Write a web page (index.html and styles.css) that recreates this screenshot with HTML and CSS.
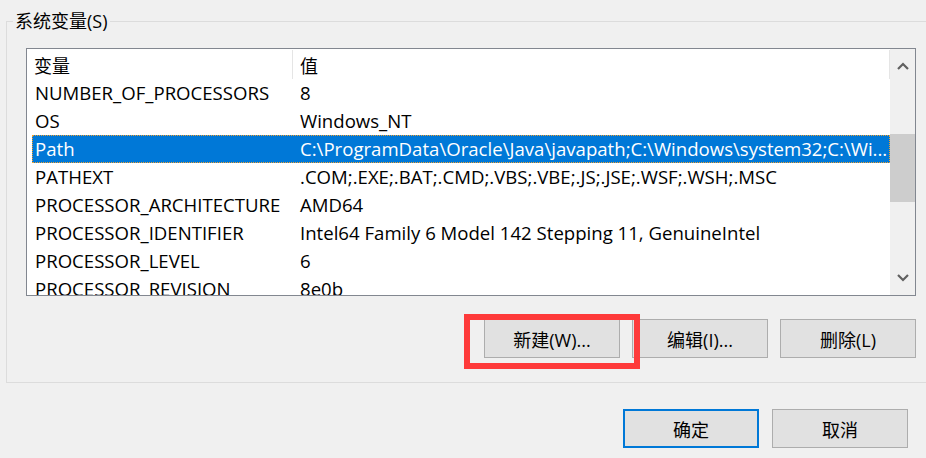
FILE: index.html
```html
<!DOCTYPE html>
<html lang="zh-CN">
<head>
<meta charset="utf-8">
<title>系统变量</title>
<link rel="stylesheet" href="styles.css">
</head>
<body>
<div class="page">
  <fieldset class="group">
    <legend class="group-title">系统变量(S)</legend>
    <div class="listbox">
      <div class="list-main">
        <div class="list-head">
          <div class="cell c1">变量</div>
          <div class="cell c2">值</div>
        </div>
        <div class="row"><div class="cell c1">NUMBER_OF_PROCESSORS</div><div class="cell c2">8</div></div>
        <div class="row"><div class="cell c1">OS</div><div class="cell c2">Windows_NT</div></div>
        <div class="row selected"><div class="cell c1">Path</div><div class="cell c2">C:\ProgramData\Oracle\Java\javapath;C:\Windows\system32;C:\Wi...</div></div>
        <div class="row"><div class="cell c1">PATHEXT</div><div class="cell c2">.COM;.EXE;.BAT;.CMD;.VBS;.VBE;.JS;.JSE;.WSF;.WSH;.MSC</div></div>
        <div class="row"><div class="cell c1">PROCESSOR_ARCHITECTURE</div><div class="cell c2">AMD64</div></div>
        <div class="row"><div class="cell c1">PROCESSOR_IDENTIFIER</div><div class="cell c2">Intel64 Family 6 Model 142 Stepping 11, GenuineIntel</div></div>
        <div class="row"><div class="cell c1">PROCESSOR_LEVEL</div><div class="cell c2">6</div></div>
        <div class="row"><div class="cell c1">PROCESSOR_REVISION</div><div class="cell c2">8e0b</div></div>
      </div>
      <div class="scrollbar">
        <div class="sb-arrow">
          <svg width="12" height="8" viewBox="0 0 12 8"><path d="M1 7 L6 2 L11 7" fill="none" stroke="#606060" stroke-width="2.2"/></svg>
        </div>
        <div class="sb-track"><div class="sb-thumb"></div></div>
        <div class="sb-arrow">
          <svg width="12" height="8" viewBox="0 0 12 8"><path d="M1 1 L6 6 L11 1" fill="none" stroke="#606060" stroke-width="2.2"/></svg>
        </div>
      </div>
    </div>
    <div class="btn-row">
      <div class="btn-wrap">
        <button class="btn">新建(W)...</button>
        <span class="highlight-box"></span>
      </div>
      <button class="btn">编辑(I)...</button>
      <button class="btn">删除(L)</button>
    </div>
  </fieldset>
  <div class="dialog-buttons">
    <button class="btn btn-default">确定</button>
    <button class="btn">取消</button>
  </div>
</div>
</body>
</html>
```

FILE: styles.css
```css
html, body {
  margin: 0;
  padding: 0;
  background: #f0f0f0;
  overflow: hidden;
}

body {
  width: 926px;
  height: 458px;
  font-family: "Open Sans", "Noto Sans CJK SC", sans-serif;
  font-size: 18.6px;
  color: #000;
}

.page {
  padding-top: 9px;
}

.group {
  margin: 0 0 0 6px;
  padding: 0 0 0 19px;
  width: 940px;
  height: 374px;
  box-sizing: border-box;
  border: 1px solid #dcdcdc;
  border-right: none;
  min-width: 0;
}

.group-title {
  padding: 0 2px;
  margin-left: -13px;
  line-height: 24px;
  font-size: 18px;
  color: #000;
}

.listbox {
  margin-top: 15px;
  width: 890px;
  height: 248px;
  box-sizing: border-box;
  border: 1px solid #828790;
  background: #fff;
  display: flex;
  overflow: hidden;
}

.list-main {
  flex: 1;
  padding-left: 5px;
  overflow: hidden;
  display: flex;
  flex-direction: column;
}

.list-head {
  height: 30px;
  flex: none;
  display: flex;
  align-items: stretch;
}

.list-head .cell {
  font-size: 18px;
  padding-top: 1px;
  border-right: 1px solid #e5e5e5;
  margin: 1px 0 0 0;
  height: 29px;
}

.list-head .c1 {
  padding-left: 2px;
}

.row {
  height: 28px;
  flex: none;
  display: flex;
  align-items: center;
  box-sizing: border-box;
}

.cell {
  display: flex;
  align-items: center;
  white-space: nowrap;
  overflow: hidden;
  box-sizing: border-box;
}

.c1 {
  width: 261px;
  padding-left: 3px;
  flex: none;
}

.c2 {
  flex: 1;
  padding-left: 7px;
}

.row .cell {
  height: 28px;
  padding-bottom: 1px;
}

.row.selected {
  background: #0078d7;
  color: #fff;
  outline: 1px dotted #f0a030;
  outline-offset: -1px;
}

.scrollbar {
  width: 25px;
  flex: none;
  background: #f0f0f0;
  display: flex;
  flex-direction: column;
}

.sb-arrow {
  height: 34px;
  flex: none;
  display: flex;
  align-items: center;
  justify-content: center;
}

.sb-track {
  flex: 1;
  padding-top: 51px;
}

.sb-thumb {
  height: 68px;
  background: #cdcdcd;
}

.btn-row {
  margin-top: 23px;
  width: 890px;
  display: flex;
  justify-content: flex-end;
  gap: 12px;
}

.btn {
  width: 136px;
  height: 39px;
  box-sizing: border-box;
  border: 1px solid #adadad;
  background: #e1e1e1;
  font-family: "Open Sans", "Noto Sans CJK SC", sans-serif;
  font-size: 18px;
  color: #000;
  padding: 0;
  margin: 0;
}

.btn-wrap {
  position: relative;
  display: flex;
}

.highlight-box {
  position: absolute;
  left: -20px;
  top: -5px;
  width: 176px;
  height: 55px;
  box-sizing: border-box;
  border: 6px solid #fe3a3a;
}

.dialog-buttons {
  margin-top: 26px;
  width: 908px;
  display: flex;
  justify-content: flex-end;
  gap: 13px;
}

.btn-default {
  border: 2px solid #0078d7;
}
```
